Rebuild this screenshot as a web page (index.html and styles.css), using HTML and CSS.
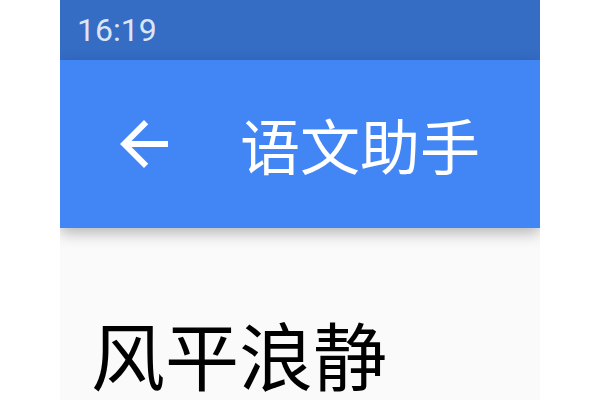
FILE: index.html
```html
<!DOCTYPE html>
<html lang="zh">
<head>
<meta charset="utf-8">
<link rel="stylesheet" href="styles.css">
</head>
<body>
<div class="phone">
  <div class="status-bar"><span class="time">16:19</span></div>
  <header class="app-bar">
    <span class="back">
      <svg viewBox="0 0 24 24" width="72" height="72"><path fill="#fff" d="M20 11H7.83l5.59-5.59L12 4l-8 8 8 8 1.41-1.41L7.83 13H20v-2z"/></svg>
    </span>
    <h1 class="title">语文助手</h1>
  </header>
  <main class="content">
    <p class="word">风平浪静</p>
  </main>
</div>
</body>
</html>
```
FILE: styles.css
```css
html, body {
  margin: 0;
  padding: 0;
  background: #ffffff;
  height: 100%;
  overflow: hidden;
}
body {
  display: flex;
  justify-content: center;
  font-family: Roboto, "Noto Sans CJK SC", sans-serif;
}
.phone {
  width: 480px;
  height: 400px;
  background: #fafafa;
  display: flex;
  flex-direction: column;
  overflow: hidden;
}
.status-bar {
  height: 60px;
  flex: none;
  background: #356dc5;
  display: flex;
  align-items: center;
  padding-left: 17px;
  box-sizing: border-box;
}
.time {
  color: #dbe5f6;
  font-size: 32px;
  line-height: 1;
  font-family: Roboto, sans-serif;
}
.app-bar {
  height: 168px;
  flex: none;
  background: #4286f5;
  display: flex;
  align-items: center;
  padding-left: 48px;
  box-sizing: border-box;
  box-shadow: 0 5px 14px rgba(0, 0, 0, 0.28);
  position: relative;
  z-index: 1;
}
.back {
  width: 72px;
  height: 72px;
  display: flex;
}
.title {
  margin: 0 0 0 60px;
  color: #ffffff;
  font-family: "Noto Sans CJK SC", sans-serif;
  font-weight: 400;
  font-size: 60px;
  line-height: 1;
}
.content {
  flex: 1;
  padding: 88px 0 0 31px;
  min-height: 0;
}
.word {
  margin: 0;
  font-family: "Noto Sans CJK SC", sans-serif;
  font-size: 74px;
  line-height: 1;
  color: #000000;
}
```
